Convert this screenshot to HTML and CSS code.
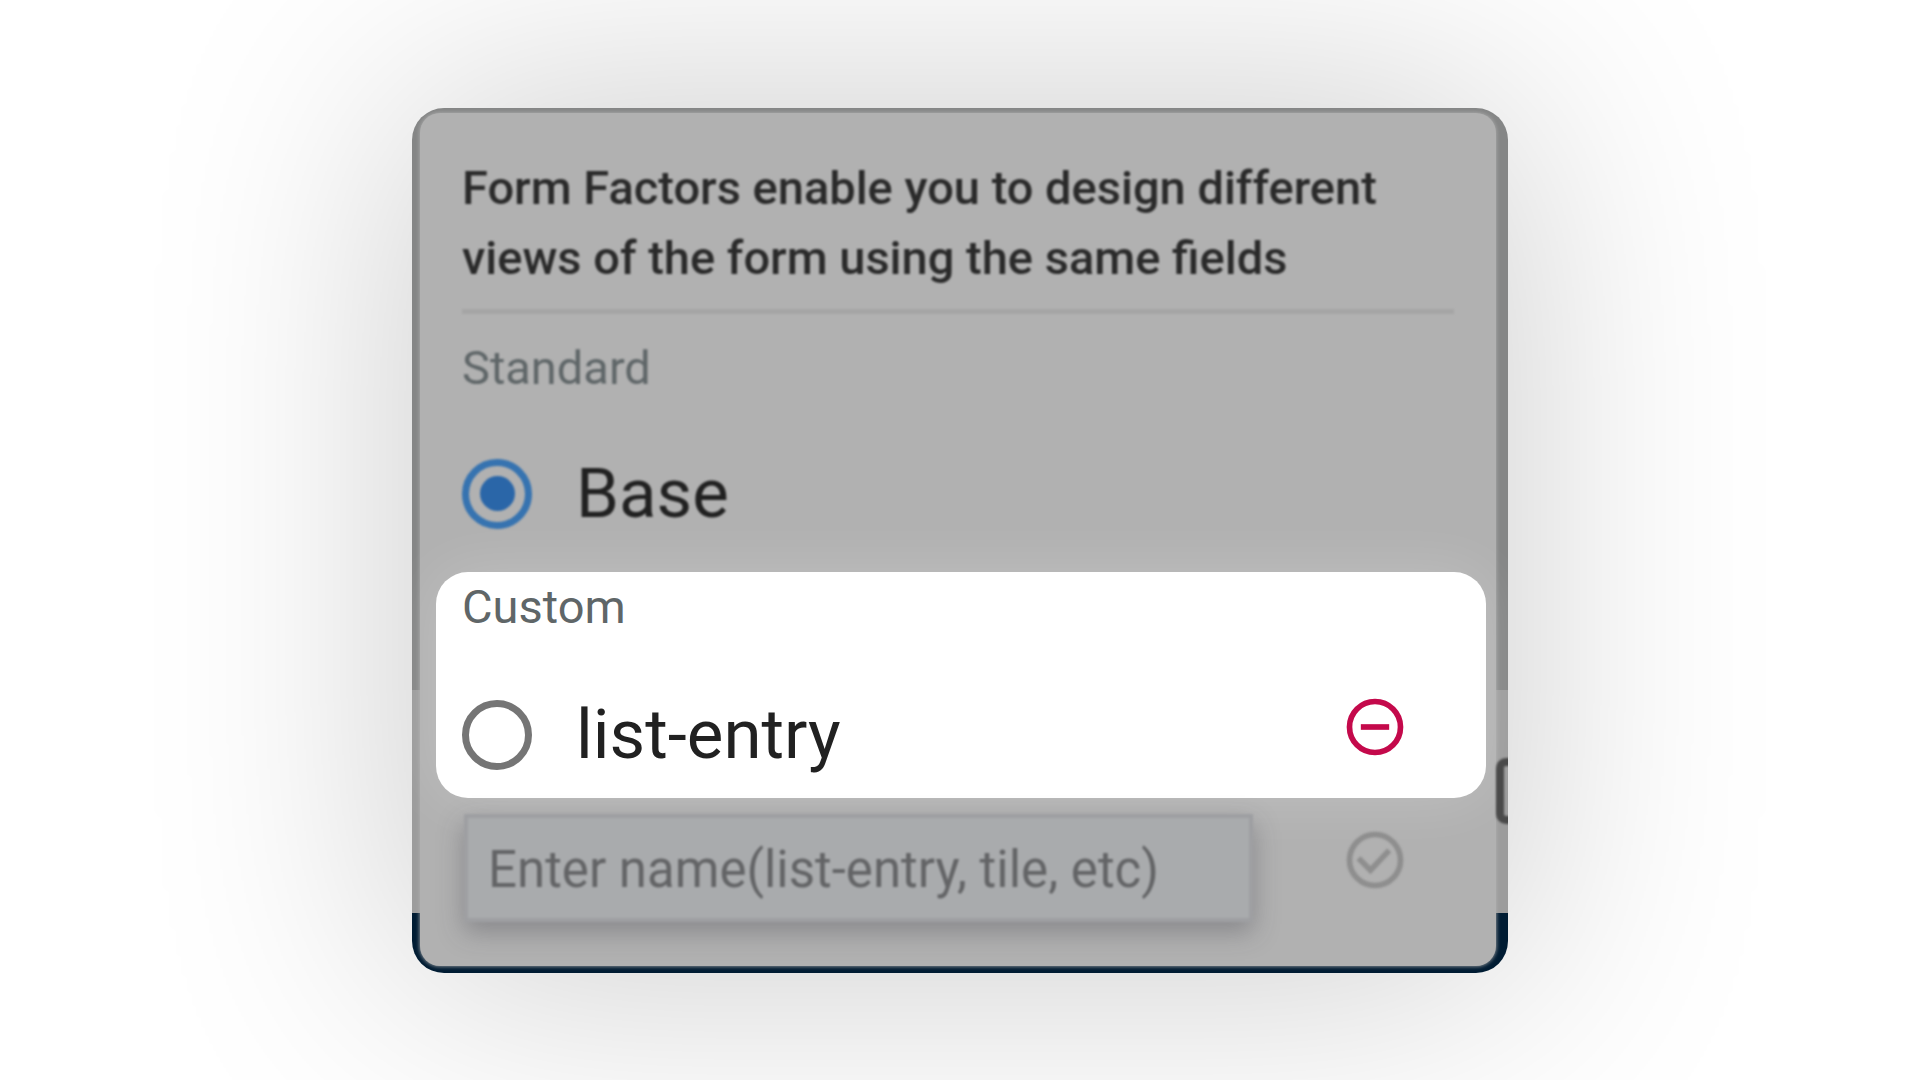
FILE: index.html
```html
<!DOCTYPE html>
<html lang="en">
<head>
    <meta charset="UTF-8">
    <title>Form Factors</title>
    <link rel="stylesheet" href="styles.css">
</head>

<body>
<div class="frame">
    <form class="panel">
        <div class="dimmed">
            <h1 class="panel-title">Form Factors enable you to design different views of the form using the same fields</h1>
            <h2 class="group-title">Standard</h2>
            <div class="row">
                <input class="radio" type="radio" name="factor" id="base" checked>
                <label class="radio-label" for="base">Base</label>
            </div>
        </div>
        <div class="spotlight">
            <h2 class="group-title">Custom</h2>
            <div class="row">
                <input class="radio" type="radio" name="factor" id="list-entry">
                <label class="radio-label" for="list-entry">list-entry</label>
                <button class="icon-btn icon-remove" type="button" aria-label="Remove list-entry">
                    <svg viewBox="0 0 24 24"><circle cx="12" cy="12" r="9"/><path d="M7 12h10"/></svg>
                </button>
            </div>
        </div>
        <div class="new-row">
            <input class="name-input" type="text" placeholder="Enter name(list-entry, tile, etc)" aria-label="Name">
            <button class="icon-btn icon-add" type="button" aria-label="Add">
                <svg viewBox="0 0 24 24"><circle cx="12" cy="12" r="9"/><path d="M6.2 11.4l4.2 4.2 6.6-7"/></svg>
            </button>
        </div>
    </form>
</div>
</body>
</html>
```
FILE: styles.css
```css
*{
    box-sizing: border-box;
}
body,h1,h2{
    margin: 0;
}
body{
    display: flex;
    align-items: center;
    justify-content: center;
    min-height: 100vh;
    overflow: hidden;
    background-color: #fff;
    font-family: Roboto, "Liberation Sans", sans-serif;
}
/* page that shows behind the panel */
.frame{
    position: relative;
    width: 100%;
    max-width: 1096px;
    padding: 5px 12px 7px 8px;
    overflow: hidden;
    border-radius: 32px;
    background: linear-gradient(#858686 0, #858686 582px, #9c9c9c 582px, #9c9c9c 805px, #001c33 805px);
    box-shadow: 0 0 300px 10px rgba(0,0,0,0.2);
}
.frame::after{
    content: "";
    position: absolute;
    top: 650px;
    left: 100%;
    width: 50px;
    height: 50px;
    margin-left: -12px;
    border: 8px solid #4a4a4a;
    border-radius: 10px;
    filter: blur(1px);
}
.panel{
    padding-bottom: 44px;
    border-radius: 20px;
    background-color: #b1b1b1;
    box-shadow: 0 0 4px #b1b1b1;
}
.dimmed{
    padding: 40px 42px 38px 42px;
    filter: blur(1px);
}
.panel-title{
    margin-bottom: 24px;
    padding-bottom: 16px;
    border-bottom: 5px solid #a5a5a5;
    color: #2a2a2a;
    font-size: 47px;
    font-weight: 500;
    line-height: 70px;
}
.group-title{
    color: #5f6668;
    font-size: 47px;
    font-weight: 400;
    line-height: 60px;
}
.row{
    display: flex;
    align-items: center;
    margin-top: 56px;
}
.radio{
    display: grid;
    place-content: center;
    width: 70px;
    height: 70px;
    margin: 0 44px 0 0;
    border: 7px solid #757575;
    border-radius: 50%;
    appearance: none;
}
.radio:checked{
    border-color: #3673b0;
}
.radio:checked::before{
    content: "";
    width: 35px;
    height: 35px;
    border-radius: 50%;
    background-color: #2a66a8;
}
.radio-label{
    flex: 1;
    color: #212121;
    font-size: 69px;
    line-height: 80px;
}
.spotlight{
    margin: 0 10px 0 16px;
    padding: 5px 77px 21px 26px;
    border-radius: 32px;
    background-color: #fff;
    box-shadow: 0 0 60px rgba(255,255,255,0.2);
}
.icon-btn{
    padding: 0 0 16px;
    border: none;
    background: none;
    cursor: pointer;
}
.icon-btn svg{
    display: block;
    width: 68px;
    height: 68px;
    fill: none;
    stroke: currentColor;
    stroke-width: 2;
}
.icon-remove{
    color: #c4094b;
}
.icon-add{
    color: #8e8e8e;
}
.new-row{
    display: flex;
    align-items: center;
    gap: 88px;
    margin-top: 16px;
    padding: 0 87px 0 44px;
    filter: blur(1px);
}
.name-input{
    flex: 1;
    min-width: 0;
    height: 108px;
    padding: 4px 20px 0;
    border: 4px solid #9e9fa2;
    background-color: #a9abad;
    box-shadow: 0 10px 24px rgba(60,60,70,0.35);
    color: #333;
    font-family: inherit;
    font-size: 51px;
}
.name-input::placeholder{
    color: #636466;
    opacity: 1;
}
```
